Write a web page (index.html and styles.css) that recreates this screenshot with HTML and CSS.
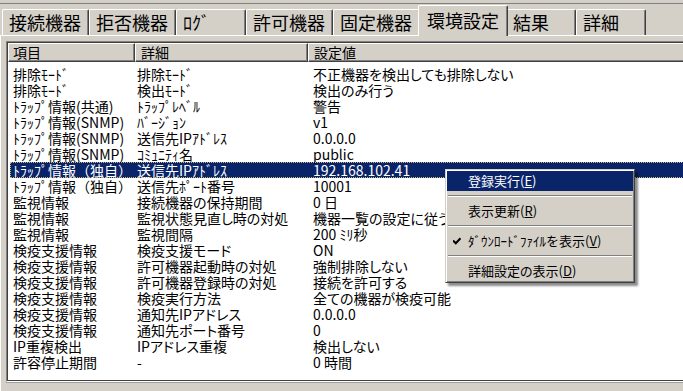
FILE: index.html
```html
<!DOCTYPE html>
<html lang="ja">
<head>
    <meta charset="UTF-8">
    <meta name="viewport" content="width=device-width, initial-scale=1.0">
    <title>環境設定</title>
    <link rel="stylesheet" href="styles.css">
</head>
<body>
    <div class="window">
        <div class="tabs">
            <div class="tab">接続機器</div>
            <div class="tab">拒否機器</div>
            <div class="tab hw">ﾛｸﾞ</div>
            <div class="tab">許可機器</div>
            <div class="tab">固定機器</div>
            <div class="tab active">環境設定</div>
            <div class="tab">結果</div>
            <div class="tab">詳細</div>
        </div>
        <div class="panel">
            <div class="listbox">
                <div class="list">
                    <div class="head">
                        <div class="hcell">項目</div>
                        <div class="hcell">詳細</div>
                        <div class="hcell">設定値</div>
                    </div>
                    <div class="rows">
                        <div class="row"><span class="hw">排除ﾓｰﾄﾞ</span><span class="hw">排除ﾓｰﾄﾞ</span><span>不正機器を検出しても排除しない</span></div>
                        <div class="row"><span class="hw">排除ﾓｰﾄﾞ</span><span class="hw">検出ﾓｰﾄﾞ</span><span>検出のみ行う</span></div>
                        <div class="row"><span class="hw">ﾄﾗｯﾌﾟ情報(共通)</span><span class="hw">ﾄﾗｯﾌﾟﾚﾍﾞﾙ</span><span>警告</span></div>
                        <div class="row"><span class="hw">ﾄﾗｯﾌﾟ情報(SNMP)</span><span class="hw">ﾊﾞｰｼﾞｮﾝ</span><span>v1</span></div>
                        <div class="row"><span class="hw">ﾄﾗｯﾌﾟ情報(SNMP)</span><span class="hw">送信先IPｱﾄﾞﾚｽ</span><span>0.0.0.0</span></div>
                        <div class="row"><span class="hw">ﾄﾗｯﾌﾟ情報(SNMP)</span><span class="hw">ｺﾐｭﾆﾃｨ名</span><span>public</span></div>
                        <div class="row selected"><span class="hw">ﾄﾗｯﾌﾟ情報（独自）</span><span class="hw">送信先IPｱﾄﾞﾚｽ</span><span>192.168.102.41</span></div>
                        <div class="row"><span class="hw">ﾄﾗｯﾌﾟ情報（独自）</span><span class="hw">送信先ﾎﾟｰﾄ番号</span><span>10001</span></div>
                        <div class="row"><span>監視情報</span><span>接続機器の保持期間</span><span>0 日</span></div>
                        <div class="row"><span>監視情報</span><span>監視状態見直し時の対処</span><span>機器一覧の設定に従う</span></div>
                        <div class="row"><span>監視情報</span><span>監視間隔</span><span class="hw">200 ﾐﾘ秒</span></div>
                        <div class="row"><span>検疫支援情報</span><span>検疫支援モード</span><span>ON</span></div>
                        <div class="row"><span>検疫支援情報</span><span>許可機器起動時の対処</span><span>強制排除しない</span></div>
                        <div class="row"><span>検疫支援情報</span><span>許可機器登録時の対処</span><span>接続を許可する</span></div>
                        <div class="row"><span>検疫支援情報</span><span>検疫実行方法</span><span>全ての機器が検疫可能</span></div>
                        <div class="row"><span>検疫支援情報</span><span>通知先IPアドレス</span><span>0.0.0.0</span></div>
                        <div class="row"><span>検疫支援情報</span><span>通知先ポート番号</span><span>0</span></div>
                        <div class="row"><span>IP重複検出</span><span>IPアドレス重複</span><span>検出しない</span></div>
                        <div class="row"><span>許容停止期間</span><span>-</span><span>0 時間</span></div>
                    </div>
                </div>
            </div>
            <div class="statusbar"></div>
        </div>
    </div>

    <!-- 右クリックメニュー -->
    <div class="menu">
        <div class="item hover"><span class="mark"></span>登録実行(<u>E</u>)</div>
        <div class="sep"></div>
        <div class="item"><span class="mark"></span>表示更新(<u>R</u>)</div>
        <div class="sep"></div>
        <div class="item hw">
            <span class="mark">
                <svg width="8" height="8" viewBox="0 0 8 8"><path d="M0 3.5 L2.8 6.3 L7.5 1.2" fill="none" stroke="#000" stroke-width="2"/></svg>
            </span>ﾀﾞｳﾝﾛｰﾄﾞﾌｧｲﾙを表示(<u>V</u>)
        </div>
        <div class="sep"></div>
        <div class="item"><span class="mark"></span>詳細設定の表示(<u>D</u>)</div>
    </div>
</body>
</html>
```

FILE: styles.css
```css
body {
    margin: 0;
    width: 683px;
    height: 391px;
    overflow: hidden;
    background-color: #d4d0c8;
    font-family: "Noto Sans CJK JP", sans-serif;
    font-feature-settings: "palt";
    color: #000;
}
/* 半角カナは詰めない */
.hw {
    font-feature-settings: normal;
}
.window {
    width: 720px;
    margin-top: 3px;
    border-top: 1px solid #808080;
}
.tabs {
    display: flex;
    align-items: flex-end;
    height: 31px;
    padding-left: 2px;
}
.tab {
    box-sizing: border-box;
    height: 26px;
    min-width: 70px;
    padding: 0 7px 0 6px;
    border-top: 1px solid #fff;
    border-left: 1px solid #fff;
    border-right: 1px solid #404040;
    border-top-left-radius: 2px;
    border-top-right-radius: 2px;
    box-shadow: inset -1px 0 #808080;
    font-size: 18px;
    line-height: 24px;
    white-space: nowrap;
}
.tab.active {
    position: relative;
    z-index: 1;
    height: 31px;
    margin: 0 -2px -1px;
    padding: 2px 8px 0;
    background-color: #d4d0c8;
}
.panel {
    border-top: 1px solid #fff;
    border-left: 1px solid #fff;
    padding: 5px 0 0 5px;
}
.listbox {
    box-sizing: border-box;
    height: 341px;
    border: 1px solid;
    border-color: #808080 #fff #fff #808080;
}
.list {
    box-sizing: border-box;
    height: 100%;
    border: 1px solid;
    border-color: #404040 #d4d0c8 #404040 #404040;
    background-color: #fff;
}
.head {
    display: grid;
    grid-template-columns: 127px 173px 1fr;
    height: 19px;
}
.hcell {
    box-sizing: border-box;
    border: 1px solid;
    border-color: #fff #404040 #404040 #fff;
    box-shadow: inset -1px -1px #808080;
    background-color: #d4d0c8;
    padding-left: 4px;
    font-size: 14px;
    line-height: 17px;
}
.hcell + .hcell {
    padding-left: 5px;
}
.rows {
    padding-top: 4px;
}
.row {
    display: grid;
    grid-template-columns: 125px 173px 1fr;
    margin-left: 2px;
    height: 16px;
    font-size: 14px;
    line-height: 16px;
    white-space: nowrap;
}
.row span:nth-child(1) {
    padding-left: 3px;
}
.row span:nth-child(2) {
    padding-left: 2px;
}
.row span:nth-child(3) {
    padding-left: 5px;
}
.row.selected {
    background-color: #0a246a;
    color: #fff;
    outline: 1px dotted #c8b878;
    outline-offset: -1px;
}
.statusbar {
    border-top: 1px solid #a0a0a0;
    height: 8px;
}
.menu {
    position: absolute;
    left: 445px;
    top: 169px;
    width: 190px;
    box-sizing: border-box;
    padding: 1px;
    border: 1px solid;
    border-color: #d4d0c8 #404040 #404040 #d4d0c8;
    background-color: #d4d0c8;
    box-shadow: inset 1px 1px #fff, inset -1px -1px #808080, 3px 3px 2px rgba(0, 0, 0, 0.45);
    font-size: 13px;
}
.item {
    display: flex;
    align-items: center;
    height: 20px;
    line-height: 20px;
    white-space: nowrap;
}
.item.hover {
    background-color: #0a246a;
    color: #fff;
}
.mark {
    display: flex;
    align-items: center;
    justify-content: center;
    width: 20px;
    padding-right: 1px;
}
.sep {
    margin: 4px 1px;
    border-top: 1px solid #808080;
    border-bottom: 1px solid #fff;
}
```
